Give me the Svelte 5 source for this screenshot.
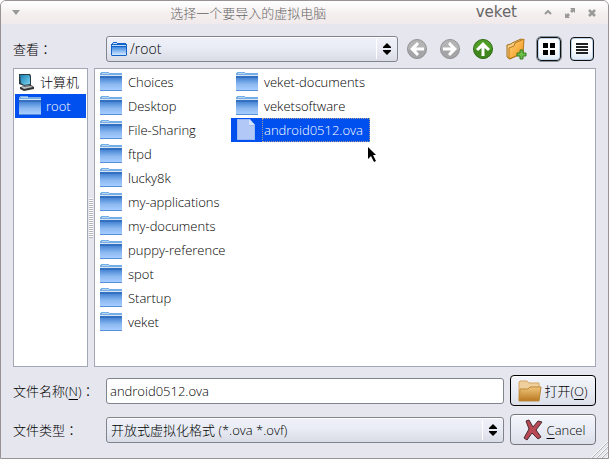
<script>
	let places = ['计算机', 'root'];
	let files = [
		'Choices',
		'Desktop',
		'File-Sharing',
		'ftpd',
		'lucky8k',
		'my-applications',
		'my-documents',
		'puppy-reference',
		'spot',
		'Startup',
		'veket',
		'veket-documents',
		'veketsoftware',
		'android0512.ova'
	];
	let place = $state('root');
	let selected = $state('android0512.ova');
	let fileName = $state('android0512.ova');
	let view = $state('list');

	function isFolder(name) {
		return !name.endsWith('.ova');
	}

	function pick(name) {
		selected = name;
		if (!isFolder(name)) fileName = name;
	}
</script>

{#snippet folder()}
	<svg class="folder" viewBox="0 0 24 24" aria-hidden="true">
		<path d="M1 4V3h1V2h8v1h13v4H1z" fill="#78aee8" />
		<path d="M3 3h7v1H3z" fill="#b5d5f5" />
		<path d="M1 5h22v1H1z" fill="#d5e5f3" />
		<path d="M1 6h22v2H1z" fill="#3470bd" />
		<path d="M1 8h22v13H1z" fill="url(#folder-front)" />
		<path d="M1 20h22v1H1z" fill="#5790dc" />
	</svg>
{/snippet}

{#snippet spinner()}
	<svg class="spinner" viewBox="0 0 8 12" aria-hidden="true">
		<path d="M4 0L8 4V5H0V4zM4 12L8 8V7H0V8z" />
	</svg>
{/snippet}

{#snippet arrow(rotation, from, to)}
	<svg width="22" height="22" viewBox="0 0 22 22" aria-hidden="true">
		<circle cx="11" cy="11" r="9.500" fill={from} stroke={to} />
		<path d="M2 12a9 9 0 0 0 18 0q-9-4-18 0z" fill={to} opacity=".45" />
		<path
			d="M4 11l7-7 2 2-3 3.500h8v3h-8l3 3.500-2 2z"
			fill="#fff"
			transform="rotate({rotation} 11 11)"
		/>
	</svg>
{/snippet}

<svg class="defs" aria-hidden="true">
	<defs>
		<linearGradient id="folder-front" x2="0" y2="1">
			<stop offset="0" stop-color="#4886d6" />
			<stop offset=".5" stop-color="#8dbaf2" />
			<stop offset="1" stop-color="#acd0ff" />
		</linearGradient>
		<linearGradient id="folder-small" x2="0" y2="1">
			<stop offset="0" stop-color="#3f8be0" />
			<stop offset="1" stop-color="#d3e8ff" />
		</linearGradient>
		<linearGradient id="manila" x2="0" y2="1">
			<stop offset="0" stop-color="#f0c67c" />
			<stop offset="1" stop-color="#b8781f" />
		</linearGradient>
		<linearGradient id="orange" x2="1" y2="1">
			<stop offset="0" stop-color="#ffd47a" />
			<stop offset="1" stop-color="#f29216" />
		</linearGradient>
		<linearGradient id="screen" x2="1" y2="1">
			<stop offset="0" stop-color="#167fb0" />
			<stop offset="1" stop-color="#7fd6f2" />
		</linearGradient>
	</defs>
</svg>

<div class="dialog">
	<header>
		<button class="win" aria-label="菜单">
			<svg width="8" height="5" viewBox="0 0 8 5"><path d="M0 0h8L4 5z" fill="#999" /></svg>
		</button>
		<h1>选择一个要导入的虚拟电脑</h1>
		<span class="host">veket</span>
		<button class="win" aria-label="最小化">
			<svg width="8" height="5" viewBox="0 0 8 5"
				><path d="M1 4l3-3 3 3" fill="none" stroke="#999" stroke-width="2" /></svg
			>
		</button>
		<button class="win" aria-label="最大化">
			<svg width="10" height="10" viewBox="0 0 10 10"
				><path
					d="M5 0h5v5L8.500 3.500 7 5 5 3l1.500-1.500zM0 5l1.500 1.500L3 5l2 2-1.500 1.500L5 10H0z"
					fill="#999"
				/></svg
			>
		</button>
		<button class="win" aria-label="关闭">
			<svg width="8" height="8" viewBox="0 0 8 8"
				><path d="M1 1l6 6M7 1l-6 6" stroke="#999" stroke-width="2.500" /></svg
			>
		</button>
	</header>

	<main>
		<div class="row top">
			<label for="dir">查看<span class="colon">：</span></label>
			<div class="combo">
				<svg width="16" height="14" viewBox="0 0 16 14" aria-hidden="true">
					<path d="M1 1h1V0h4v1h9v1h1v11l-1 1H1l-1-1V2h1z" fill="#1262c8" />
					<path d="M2 1h4v1H2zM1 3h14v1H1z" fill="#c3e0ff" />
					<path d="M1 5h14v8H1z" fill="url(#folder-small)" />
				</svg>
				<select id="dir" class="dir"><option>/root</option></select>
				{@render spinner()}
			</div>
			<div class="tools">
				<button class="tool" aria-label="后退">{@render arrow(0, '#b4b4b4', '#929296')}</button>
				<button class="tool" aria-label="前进">{@render arrow(180, '#b4b4b4', '#929296')}</button>
				<button class="tool" aria-label="上一级">{@render arrow(90, '#4e9d24', '#2f6b14')}</button>
				<button class="tool" aria-label="新建文件夹">
					<svg width="22" height="24" viewBox="0 0 22 24" aria-hidden="true">
						<path d="M2 8l4-1 1-1 9-4 2 1v13L5 22l-3-2z" fill="#f6cf85" stroke="#a5711c" />
						<path d="M4 11l5-2 1-3 9-4-1 14L4 22z" fill="url(#orange)" stroke="#b7791b" />
						<path d="M15 13h3v3h3v3h-3v3h-3v-3h-3v-3h3z" fill="#6cc04a" stroke="#347c21" />
					</svg>
				</button>
				<button
					class="tool view"
					class:on={view == 'list'}
					aria-label="列表"
					onclick={() => (view = 'list')}
				>
					<svg width="12" height="12" viewBox="0 0 12 12"
						><path d="M0 0h5v5H0zM7 0h5v5H7zM0 7h5v5H0zM7 7h5v5H7z" /></svg
					>
				</button>
				<button
					class="tool view"
					class:on={view == 'detail'}
					aria-label="详细"
					onclick={() => (view = 'detail')}
				>
					<svg width="12" height="12" viewBox="0 0 12 12"
						><path d="M0 0h12v2H0zM0 3h12v2H0zM0 6h12v2H0zM0 9h12v2H0z" fill="#222" /></svg
					>
				</button>
			</div>
		</div>

		<div class="panes">
			<ul class="pane places">
				{#each places as item (item)}
					<li>
						<button class="item" class:marked={place == item} onclick={() => (place = item)}>
							{#if item == 'root'}
								{@render folder()}
							{:else}
								<svg class="computer" viewBox="0 0 18 18" aria-hidden="true">
									<path d="M1 1h11l1 2v9l-7 1-5-2z" fill="#2c3a42" />
									<path d="M2 2h9l1 2v7l-6 1-3-2z" fill="url(#screen)" />
									<path d="M2 14l11-2 3 2v2l-10 2-4-2z" fill="#333" />
									<path d="M3 14l10-1 2 1-9 2z" fill="#b9c0c3" />
								</svg>
							{/if}
							<span>{item}</span>
						</button>
					</li>
				{/each}
			</ul>
			<div class="splitter"><i></i></div>
			<ul class="pane files">
				{#each files as name (name)}
					<li>
						<button class="item" class:marked={selected == name} onclick={() => pick(name)}>
							{#if isFolder(name)}
								{@render folder()}
							{:else}
								<svg class="folder" viewBox="0 0 24 24" aria-hidden="true">
									<path d="M2 1h13l5 6v15H2z" fill="#9cb9f4" />
									<path d="M3 2h11v6h5v13H3z" fill="#b2c8f6" />
									<path d="M14 1v6h6z" fill="#d8e4ff" />
								</svg>
							{/if}
							<span>{name}</span>
						</button>
					</li>
				{/each}
			</ul>
		</div>

		<div class="row">
			<label for="name">文件名称(<u>N</u>)<span class="colon">：</span></label>
			<input id="name" type="text" bind:value={fileName} />
			<button class="action default">
				<svg width="24" height="24" viewBox="0 0 24 24" aria-hidden="true">
					<path d="M1 21V3l1-1h7l2 2h10v17z" fill="#efcf9c" stroke="#d2a465" />
					<path d="M1 22l1-12h8l2-2h11l-2 14z" fill="url(#manila)" stroke="#bd8738" />
				</svg>
				<span>打开(<u>O</u>)</span>
			</button>
		</div>
		<div class="row">
			<label for="type">文件类型<span class="colon">：</span></label>
			<div class="combo">
				<select id="type"><option>开放式虚拟化格式 (*.ova *.ovf)</option></select>
				{@render spinner()}
			</div>
			<button class="action">
				<svg width="24" height="24" viewBox="0 0 24 24" aria-hidden="true">
					<path
						d="M5 3l3-1 4 7 5-6 4 1-6 8 5 7-3 2-6-6-5 7-3-2 5-9z"
						fill="#b84854"
						stroke="#4a2a2e"
						stroke-linejoin="round"
					/>
				</svg>
				<span><u>C</u>ancel</span>
			</button>
		</div>
	</main>

	<svg class="grip" width="18" height="18" viewBox="0 0 18 18" aria-hidden="true">
		<path d="M1 18L18 1M6 18L18 6M11 18l7-7M16 18l2-2" stroke="#fff" />
		<path d="M2 18L18 2M7 18L18 7M12 18l6-6" stroke="#b4b4ba" />
	</svg>
	<svg class="pointer" width="10" height="16" viewBox="0 0 10 16" aria-hidden="true">
		<path d="M0 0l8 8H5l3 6-2 1-3-6-3 3z" />
	</svg>
</div>

<style>
	:global(body) {
		margin: 0;
		background: #fff;
	}
	.defs {
		position: absolute;
		width: 0;
		height: 0;
	}
	.dialog {
		position: relative;
		box-sizing: border-box;
		min-height: 100vh;
		display: flex;
		flex-direction: column;
		border: 1px solid #999294;
		border-radius: 6px 6px 0 0;
		background: #e6e6ee;
		color: #000;
		font: 300 13px/16px 'Open Sans', 'Noto Sans CJK SC', sans-serif;
	}
	button,
	input,
	select {
		font: inherit;
		color: inherit;
		margin: 0;
		padding: 0;
		border: none;
		background: none;
	}
	svg {
		display: block;
		flex: none;
	}
	u {
		text-underline-offset: 3px;
	}
	header {
		display: flex;
		align-items: center;
		height: 23px;
		padding: 0 11px 0 10px;
		border-radius: 5px 5px 0 0;
		background: linear-gradient(#fff, #f4eeee 60%, #f0eaec);
		color: #666;
	}
	h1 {
		flex: 1;
		margin: 0;
		text-align: center;
		font-size: 13px;
		font-weight: inherit;
	}
	.host {
		font: 15px/20px 'DejaVu Sans', sans-serif;
		margin: 0 26px 2px 0;
	}
	.win {
		display: grid;
		place-items: center;
		width: 10px;
		height: 16px;
	}
	.win + .win {
		margin-left: 12px;
	}
	main {
		flex: 1;
		display: flex;
		flex-direction: column;
		gap: 8px;
		padding: 12px 12px 13px;
	}
	.row {
		display: flex;
		align-items: center;
		gap: 6px;
	}
	.top {
		margin-bottom: -2px;
	}
	label {
		width: 87px;
		white-space: nowrap;
	}
	.colon {
		font-family: 'Noto Sans CJK TC', sans-serif;
	}
	.combo,
	input {
		flex: 1;
		min-width: 0;
		box-sizing: border-box;
		height: 26px;
		border: 1px solid #80848c;
		border-radius: 3px;
	}
	.combo {
		display: flex;
		align-items: center;
		gap: 3px;
		padding: 0 6px 0 4px;
		background: linear-gradient(#eef1f8, #e9ecf4 45%, #d9dce5);
		box-shadow: inset 0 1px #fff;
	}
	.combo select {
		flex: 1;
		min-width: 0;
		height: 20px;
		appearance: none;
		border-right: 1px solid #fff;
	}
	.combo .dir {
		font-size: 14px;
	}
	.spinner {
		width: 8px;
		height: 12px;
		margin-left: 3px;
	}
	input {
		padding: 0 3px;
		background: #fff;
	}
	.tools {
		display: flex;
		align-items: center;
		gap: 7px;
		margin-right: 1px;
	}
	.tool {
		box-sizing: border-box;
		display: grid;
		place-items: center;
		width: 26px;
		height: 26px;
	}
	.view {
		height: 24px;
		width: 24px;
		margin: 1px;
		border: 1px solid #111;
		border-radius: 4px;
		background: linear-gradient(#fff 50%, #dbe7f5);
		box-shadow: inset 0 0 0 1px #bcd3ea;
	}
	.view.on {
		outline: 1px solid #88919a;
	}
	.panes {
		flex: 1;
		display: flex;
	}
	ul {
		list-style: none;
		margin: 0;
		padding: 0;
	}
	.pane {
		box-sizing: border-box;
		min-height: 280px;
		border: 1px solid #a3a6b4;
		background: #fff;
	}
	.places {
		width: 75px;
		padding: 1px;
	}
	.splitter {
		width: 6px;
		display: grid;
		place-items: center;
	}
	.splitter i {
		width: 4px;
		height: 40px;
		background: repeating-linear-gradient(#fff 0 1px, #b5b5bd 1px 2px);
	}
	.files {
		flex: 1;
		display: grid;
		grid-auto-flow: column;
		grid-template-rows: repeat(11, 24px);
		grid-auto-columns: minmax(136px, max-content) minmax(139px, max-content);
		justify-content: start;
		align-content: start;
		padding-top: 1px;
	}
	.item {
		display: flex;
		align-items: center;
		gap: 3px;
		width: 100%;
		height: 24px;
		padding-left: 4px;
		text-align: left;
		white-space: nowrap;
	}
	.item span {
		flex: 1;
		padding: 3px 2px 3px 1px;
		border: 1px solid transparent;
	}
	.places .item {
		gap: 2px;
		padding-left: 3px;
	}
	.places .item span {
		padding-right: 0;
	}
	.item.marked {
		background: #0050f0;
		color: #fff;
	}
	.files .marked span {
		border: 1px dotted #a99f90;
	}
	.folder {
		width: 24px;
		height: 24px;
	}
	.computer {
		width: 18px;
		height: 18px;
	}
	.action {
		box-sizing: border-box;
		display: flex;
		align-items: center;
		justify-content: center;
		gap: 2px;
		width: 86px;
		height: 31px;
		border: 1px solid #70757e;
		border-radius: 4px;
		background: linear-gradient(#f4f6fb, #e9ecf4 50%, #dcdfe8);
		box-shadow: inset 0 1px #fff;
	}
	.default {
		border-color: #000;
	}
	.grip {
		position: absolute;
		right: 0;
		bottom: 0;
	}
	.pointer {
		position: absolute;
		left: 367px;
		top: 146px;
	}
</style>
